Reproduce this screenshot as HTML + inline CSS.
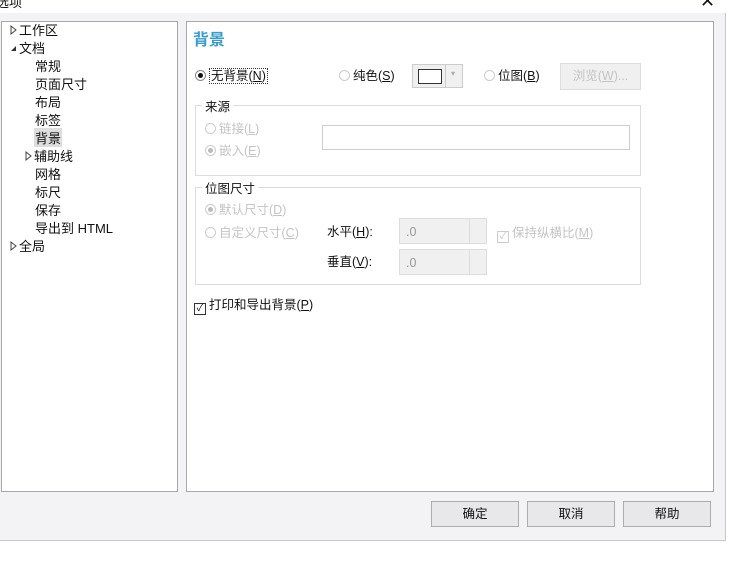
<!DOCTYPE html>
<html><head><meta charset="utf-8"><style>
*{margin:0;padding:0;box-sizing:border-box}
body{width:749px;height:567px;background:#fff;position:relative;overflow:hidden;font-family:"Liberation Sans","Noto Sans CJK SC",sans-serif;font-size:12.5px;color:#111}
.a{position:absolute;white-space:nowrap}
.win{left:0;top:13px;width:726px;height:528px;background:#f3f2f4;border-right:1px solid #c8c8c8;border-bottom:1px solid #c8c8c8}
.pl{left:1px;top:21px;width:177px;height:471px;background:#fff;border:1px solid #a8a8a8}
.pr{left:186px;top:21px;width:528px;height:471px;background:#fff;border:1px solid #a8a8a8}
.t{font-size:13px}
.g{color:#c4c4c4}
.rad{display:inline-block;width:11px;height:11px;border:1px solid #888;border-radius:50%;vertical-align:-1px;margin-right:3px;background:#fff;position:relative}
.rad.gr{border-color:#ccc}
.rad.on::after{content:"";position:absolute;left:2px;top:2px;width:5px;height:5px;border-radius:50%;background:#111}
.rad.gr.on::after{background:#bbb}
.box{border:1px solid #dcdcdc}
.btn{border:1px solid #adadad;background:#e8e7ea;text-align:center;line-height:24px;height:26px}
</style></head><body>
<div class="a" style="left:-4px;top:-8px;font-size:13px">选项</div>
<div class="a" style="left:700px;top:-9px;font-size:18px">✕</div>
<div class="a win"></div>
<div class="a pl"></div>
<div class="a pr"></div>
<div class="a t" style="left:10px;top:20px"><svg width="7" height="10" style="margin-right:2px"><path d="M1 1 L6 5 L1 9 Z" fill="none" stroke="#444"/></svg>工作区</div>
<div class="a t" style="left:10px;top:38px"><svg width="7" height="10" style="margin-right:2px"><path d="M6 3 L6 8 L1 8 Z" fill="#333"/></svg>文档</div>
<div class="a t" style="left:35px;top:56px">常规</div>
<div class="a t" style="left:35px;top:74px">页面尺寸</div>
<div class="a t" style="left:35px;top:92px">布局</div>
<div class="a t" style="left:35px;top:110px">标签</div>
<div class="a t" style="left:34px;top:128px;background:#ddd;padding:0 1px">背景</div>
<div class="a t" style="left:25px;top:146px"><svg width="7" height="10" style="margin-right:2px"><path d="M1 1 L6 5 L1 9 Z" fill="none" stroke="#444"/></svg>辅助线</div>
<div class="a t" style="left:35px;top:164px">网格</div>
<div class="a t" style="left:35px;top:182px">标尺</div>
<div class="a t" style="left:35px;top:200px">保存</div>
<div class="a t" style="left:35px;top:218px">导出到 HTML</div>
<div class="a t" style="left:10px;top:236px"><svg width="7" height="10" style="margin-right:2px"><path d="M1 1 L6 5 L1 9 Z" fill="none" stroke="#444"/></svg>全局</div>
<div class="a" style="left:193px;top:26px;font-size:16px;font-weight:bold;color:#3a9cc8">背景</div>
<div class="a" style="left:195px;top:65px"><span class="rad on"></span><span style="border:1px dotted #333;padding:0 1px">无背景(<u>N</u>)</span></div>
<div class="a" style="left:339px;top:65px"><span class="rad gr"></span>纯色(<u>S</u>)</div>
<div class="a" style="left:412px;top:64px;width:51px;height:24px;border:1px solid #ccc;background:#f0f0f0"><div class="a" style="left:5px;top:4px;width:24px;height:15px;border:1px solid #333;background:#fff"></div><div class="a" style="left:32px;top:0;height:22px;border-left:1px solid #ccc"></div><div class="a" style="left:38px;top:4px;font-size:8px;color:#aaa">▾</div></div>
<div class="a" style="left:484px;top:65px"><span class="rad gr"></span>位图(<u>B</u>)</div>
<div class="a g" style="left:560px;top:63px;width:81px;height:27px;border:1px solid #ddd;background:#f0f0f0;text-align:center;line-height:25px">浏览(<u>W</u>)...</div>
<div class="a box" style="left:195px;top:105px;width:446px;height:71px"></div>
<div class="a" style="left:202px;top:96px;background:#fff;padding:0 3px">来源</div>
<div class="a g" style="left:205px;top:118px"><span class="rad gr"></span>链接(<u>L</u>)</div>
<div class="a g" style="left:205px;top:140px"><span class="rad gr on"></span>嵌入(<u>E</u>)</div>
<div class="a" style="left:322px;top:125px;width:308px;height:25px;border:1px solid #ccc"></div>
<div class="a box" style="left:195px;top:187px;width:446px;height:98px"></div>
<div class="a" style="left:202px;top:178px;background:#fff;padding:0 3px">位图尺寸</div>
<div class="a g" style="left:205px;top:199px"><span class="rad gr on"></span>默认尺寸(<u>D</u>)</div>
<div class="a g" style="left:205px;top:222px"><span class="rad gr"></span>自定义尺寸(<u>C</u>)</div>
<div class="a" style="left:327px;top:221px">水平(<u>H</u>):</div>
<div class="a" style="left:327px;top:251px">垂直(<u>V</u>):</div>
<div class="a" style="left:399px;top:218px;width:88px;height:26px;border:1px solid #ddd;background:#f0f0f0;color:#999;padding:6px 0 0 6px">.0</div>
<div class="a" style="left:469px;top:219px;height:24px;border-left:1px solid #ddd"></div>
<div class="a" style="left:399px;top:249px;width:88px;height:26px;border:1px solid #ddd;background:#f0f0f0;color:#999;padding:6px 0 0 6px">.0</div>
<div class="a" style="left:469px;top:250px;height:24px;border-left:1px solid #ddd"></div>
<div class="a g" style="left:497px;top:222px"><span style="display:inline-block;width:12px;height:12px;border:1px solid #ccc;vertical-align:-2px;margin-right:3px;font-size:10px;line-height:10px;text-align:center">✓</span>保持纵横比(<u>M</u>)</div>
<div class="a" style="left:194px;top:294px"><span style="display:inline-block;width:12px;height:12px;border:1px solid #333;vertical-align:-2px;margin-right:3px;font-size:10px;line-height:10px;text-align:center">✓</span>打印和导出背景(<u>P</u>)</div>
<div class="a btn" style="left:431px;top:501px;width:88px">确定</div>
<div class="a btn" style="left:527px;top:501px;width:88px">取消</div>
<div class="a btn" style="left:623px;top:501px;width:88px">帮助</div>
</body></html>
